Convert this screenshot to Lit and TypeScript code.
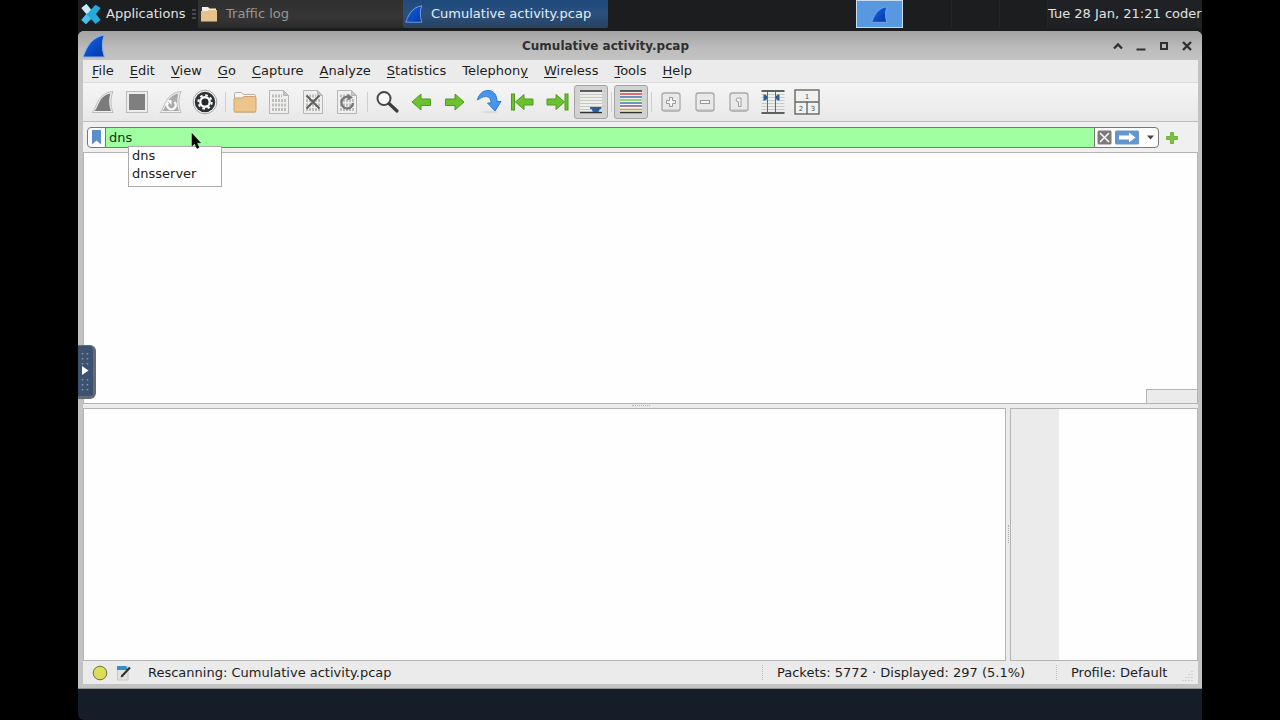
import { LitElement, html, css, svg, nothing, TemplateResult } from "lit";
import { customElement, property, state } from "lit/decorators.js";
import { classMap } from "lit/directives/class-map.js";

const icon = (body: unknown, size = 28, view = 28): TemplateResult =>
  html`<svg width=${size} height=${size} viewBox="0 0 ${view} ${view}" aria-hidden="true">${body}</svg>`;

const sheet = (mark: unknown) => svg`
  <path d="M4.500 2.500H18.500L23.500 7.500V25.500H4.500Z" fill="#f0f0ef" stroke="#b5b5b5"/>
  <path d="M18.500 2.500V7.500H23.500Z" fill="#c4c4c4" stroke="#b5b5b5"/>
  <path d="M7 8H17M7 12.500H21M7 17H21M7 21.500H21" stroke="#bdbdbd" stroke-width="3" stroke-dasharray="2 1"/>
  ${mark}`;

const keycap = (mark: unknown) => svg`
  <rect x="5" y="5" width="18" height="18" rx="2.500" fill="#e9e9e9" stroke="#a8a8a8" stroke-width="1.300"/>
  <path d="M6.500 21.500H21.500" stroke="#cfcfcf"/>
  ${mark}`;

const blueFin = svg`
  <path d="M1 22C4 14 8 3 21.500 1C18.500 8 19.500 16 21.500 22Z" fill="url(#fin)" stroke="#8fb0e6" stroke-width="1"/>
  <defs><linearGradient id="fin" x1="0" y1="0" x2="1" y2="1">
    <stop offset="0" stop-color="#3f83ea"/><stop offset="0.450" stop-color="#0b50cc"/><stop offset="1" stop-color="#0738a5"/>
  </linearGradient></defs>`;

const GREEN = "#6cc22c";
const GREEN_EDGE = "#4f9a22";

const tools: Record<string, unknown> = {
  start: svg`<path d="M3 24.500C8 20 8 5 24 3.500C21 11 21.500 18 24 24.500Z" fill="#efefef" stroke="#bdbdbd"/>
    <path d="M5.500 23C10 18 10 7.500 21.500 5.500C19.500 12 20 17 22 23Z" fill="#7b7b7b"/>`,
  stop: svg`<rect x="3.500" y="3.500" width="21" height="21" fill="#ededed" stroke="#bcbcbc"/>
    <rect x="6" y="6" width="16" height="16" fill="#7f7f7f"/>`,
  restart: svg`<path d="M3 24.500C8 20 8 5 24 3.500C21 11 21.500 18 24 24.500Z" fill="#efefef" stroke="#bdbdbd"/>
    <path d="M5.500 23C10 18 10 7.500 21.500 5.500C19.500 12 20 17 22 23Z" fill="#aaaaaa"/>
    <path d="M11 14.500A4.300 4.300 0 1 0 17.500 14" fill="none" stroke="#fafafa" stroke-width="2.400"/>
    <path d="M9.500 12H14.500V17Z" fill="#fafafa"/>`,
  options: svg`<circle cx="14" cy="14" r="11.800" fill="#fff" stroke="#a0a0a0"/>
    <circle cx="14" cy="14" r="10.300" fill="#2e3234"/>
    <circle cx="14" cy="14" r="6.700" fill="none" stroke="#fff" stroke-width="2" stroke-dasharray="2.600 2.660"/>
    <circle cx="14" cy="14" r="4.700" fill="none" stroke="#fff" stroke-width="2.400"/>
    <circle cx="14" cy="14" r="3.200" fill="#24282a"/>`,
  open: svg`<path d="M3.500 24V5.500Q3.500 4.500 4.500 4.500H10.500L12.500 6.500H23.500Q24.500 6.500 24.500 7.500V24Z" fill="#f7f5f2" stroke="#b4aca2"/>
    <path d="M3 11.500Q3 10 4.500 10H11L13 8.500H23.500Q25 8.500 25 10V22.500Q25 24 23.500 24H4.500Q3 24 3 22.500Z" fill="#edc48c" stroke="#cda26c"/>`,
  save: sheet(nothing),
  close: sheet(svg`<path d="M7.500 7.500L20.500 20.500M20.500 7.500L7.500 20.500" stroke="#606060" stroke-width="2"/>`),
  reload: sheet(svg`<path d="M15.500 9A5.800 5.800 0 1 0 20 15" fill="none" stroke="#777" stroke-width="2.400"/><path d="M14.500 5.500L20 9.500L14.500 12.500Z" fill="#777"/>`),
  find: svg`<circle cx="11" cy="10.500" r="6.500" fill="#f8f8f8" stroke="#484848" stroke-width="2"/>
    <path d="M16 15.500L24 23" stroke="#3d3d3d" stroke-width="3.200" stroke-linecap="round"/>`,
  back: svg`<path d="M5 14L14 6V11H23.500V17.500H14V22Z" fill=${GREEN} stroke=${GREEN_EDGE} stroke-linejoin="round"/>`,
  forward: svg`<path d="M23 14L14 6V11H4.500V17.500H14V22Z" fill=${GREEN} stroke=${GREEN_EDGE} stroke-linejoin="round"/>`,
  goto: svg`<ellipse cx="15" cy="24" rx="8" ry="1.500" fill="#dcdcdc"/>
    <path d="M2.500 12C4 5.500 8.500 2.500 13 2.500C19 2.500 22 7.500 22 13.500H26L20 23L12.500 15H16C16 10.500 14 8.500 10.500 8.500C7 8.500 5 10.500 2.500 12Z" fill="#4796ee" stroke="#2f76cf" stroke-linejoin="round"/>`,
  first: svg`<path d="M6.500 14L15 6.500V11H24V17H15V21.500Z" fill=${GREEN} stroke=${GREEN_EDGE} stroke-linejoin="round"/>
    <rect x="2.500" y="6" width="3" height="16" fill=${GREEN} stroke=${GREEN_EDGE}/>`,
  last: svg`<path d="M21.500 14L13 6.500V11H4V17H13V21.500Z" fill=${GREEN} stroke=${GREEN_EDGE} stroke-linejoin="round"/>
    <rect x="22" y="6" width="3" height="16" fill=${GREEN} stroke=${GREEN_EDGE}/>`,
  autoscroll: svg`<rect x="3" y="3" width="22" height="22" fill="#eeeeec"/>
    <path d="M3 3H25M3 24.500H25" stroke="#2e3436" stroke-width="1.500"/>
    <path d="M3 6.500H25M3 9.500H25M3 12.500H25M3 15.500H25M3 18.500H25M3 21.500H25" stroke="#c5c7c2"/>
    <path d="M13 19H24.500V20.500L22.500 21.500Q22.500 24 20.500 24H17Q15 24 15 21.500L13 20.500Z" fill="#2b5d9c"/>`,
  colorize: svg`<rect x="3" y="3" width="22" height="22" fill="#f4f4f2"/>
    <path d="M3 3H25M3 24.500H25" stroke="#2e3436" stroke-width="1.500"/>
    <path d="M3 6H25" stroke="#e0403a" stroke-width="1.500"/><path d="M3 9H25" stroke="#3f6fb0" stroke-width="1.500"/>
    <path d="M3 12H25" stroke="#71cf3c" stroke-width="1.500"/><path d="M3 15H25" stroke="#4673b3" stroke-width="1.500"/>
    <path d="M3 18H25" stroke="#7b5b8c" stroke-width="1.500"/><path d="M3 21.500H25" stroke="#caa02c" stroke-width="1.500"/>`,
  zoomin: keycap(svg`<path d="M12.500 9.500H15.500V12.500H18.500V15.500H15.500V18.500H12.500V15.500H9.500V12.500H12.500Z" fill="#f5f5f5" stroke="#999"/>`),
  zoomout: keycap(svg`<rect x="9.500" y="12.500" width="9" height="3" fill="#f5f5f5" stroke="#999"/>`),
  normal: keycap(svg`<path d="M16 18.500V10H12.800Q11 10.300 11 12Q11.200 13.800 13.500 13.800V18.500H16" fill="#f5f5f5" stroke="#999"/>`),
  columns: svg`<path d="M2.500 12.500H25.500M2.500 15.500H25.500M2.500 18.500H25.500M2.500 21.500H25.500M2.500 9.500H25.500M2.500 6.500H25.500" stroke="#c9cbc6"/>
    <path d="M2.500 3H25.500M2.500 25H25.500" stroke="#2e3436" stroke-width="1.500"/>
    <path d="M8.500 3V25M16.500 3V25" stroke="#666864"/>
    <path d="M4.500 6.500H6L8 8V11L6 12.500H4.500ZM20.500 6.500H19L17 8V11L19 12.500H20.500Z" fill="#2b5d9c"/>`,
  layout: svg`<rect x="2" y="2" width="24" height="24" fill="#f1f1f0" stroke="#666864" stroke-width="1.400"/>
    <path d="M2 14H26M14 14V26" stroke="#666864" stroke-width="1.400"/>
    <text x="14" y="11" class="digit">1</text><text x="8" y="23" class="digit">2</text><text x="20" y="23" class="digit">3</text>`,
};

interface Tool { id: string; label: string; off?: boolean; pressed?: boolean; }

const groups: Tool[][] = [
  [
    { id: "start", label: "Start capture", off: true },
    { id: "stop", label: "Stop capture", off: true },
    { id: "restart", label: "Restart capture", off: true },
    { id: "options", label: "Capture options" },
  ],
  [
    { id: "open", label: "Open file" },
    { id: "save", label: "Save file", off: true },
    { id: "close", label: "Close file", off: true },
    { id: "reload", label: "Reload file", off: true },
  ],
  [
    { id: "find", label: "Find packet" },
    { id: "back", label: "Go back" },
    { id: "forward", label: "Go forward" },
    { id: "goto", label: "Go to packet" },
    { id: "first", label: "First packet" },
    { id: "last", label: "Last packet" },
    { id: "autoscroll", label: "Auto scroll", pressed: true },
  ],
  [{ id: "colorize", label: "Colorize packet list", pressed: true }],
  [
    { id: "zoomin", label: "Zoom in", off: true },
    { id: "zoomout", label: "Zoom out", off: true },
    { id: "normal", label: "Normal size", off: true },
    { id: "columns", label: "Resize columns" },
    { id: "layout", label: "Layout" },
  ],
];

const reset = css`
  :host { font: 13px/18px "DejaVu Sans", sans-serif; }
  * { box-sizing: border-box; }
  button, input { font: inherit; color: inherit; background: none; border: 0; padding: 0; margin: 0; border-radius: 0; }
  svg { display: block; flex: none; }
`;

@customElement("task-bar")
export class TaskBar extends LitElement {
  static styles = [reset, css`
    :host { display: block; flex: none; }
    .bar { display: flex; height: 31px; padding-bottom: 3px; background: #1c1d1f; color: #e2e2e2; }
    .apps { display: flex; align-items: center; gap: 4px; width: 120px; padding-left: 2px; flex: none; white-space: nowrap; }
    .task { display: flex; align-items: center; gap: 8px; width: 205px; padding-left: 2px; flex: none; color: #969696;
      background: linear-gradient(#2f2f2f, #363636 60%, #2b2b2b); }
    .task.active { color: #e6edf5; background: linear-gradient(#1f4a7c, #2a507e 50%, #29425f); border-radius: 0 0 2px 2px; }
    .grip { margin-left: 3px; }
    .space { flex: 1; }
    .desks { display: flex; }
    .desk { width: 48px; border-right: 1px solid #252628; display: grid; place-items: center; }
    .desk.on { width: 47px; margin-right: 1px; background: #5798e0; border: 1px solid #c9dcf2; }
    .clock { min-width: 154px; flex: none; display: flex; align-items: center; background: #202124; white-space: nowrap; }
  `];

  render() {
    return html`<nav class="bar" aria-label="Panel">
      <button class="apps">
        ${icon(svg`<path d="M1.500 5.500L7 1L12 7L17 2L22.500 5.500L17.500 12L22.500 18.500L17 23L12 17.500L6.500 23L1.500 18.500L7 12Z" fill="#27a9dc"/>
          <path d="M1.500 5.500L7 1L12 7L9 10.500L7 12Z" fill="#c6ebf7"/><path d="M12 17.500L6.500 23L1.500 18.500L7 12Z" fill="#4dbfe6"/>`, 22, 24)}
        Applications
        <svg class="grip" width="4" height="11" viewBox="0 0 4 11" aria-hidden="true"><path d="M0 1H4M0 5H4M0 9H4" stroke="#777"/></svg>
      </button>
      <button class="task">
        ${icon(svg`<path d="M2 16V2H8L9.500 3.500H16V16Z" fill="#f4f0e6"/><path d="M1 16.500V6H7L8.500 5H17V16.500Z" fill="#e6c38b"/>`, 18, 18)}
        Traffic log
      </button>
      <button class="task active">${icon(blueFin, 18, 23)} Cumulative activity.pcap</button>
      <div class="space"></div>
      <div class="desks">
        <button class="desk on" aria-label="Workspace 1">${icon(blueFin, 17, 23)}</button>
        <button class="desk" aria-label="Workspace 2"></button>
        <button class="desk" aria-label="Workspace 3"></button>
        <button class="desk" aria-label="Workspace 4"></button>
      </div>
      <div class="clock">Tue 28 Jan, 21:21 coder</div>
    </nav>`;
  }
}

@customElement("tool-strip")
export class ToolStrip extends LitElement {
  static styles = [reset, css`
    :host { display: block; flex: none; }
    .strip { display: flex; align-items: center; height: 40px; padding-left: 3px; border-top: 1px solid #dcdcdc;
      border-bottom: 1px solid #bdbdbd; background: linear-gradient(#f5f5f5, #e8e8e8); }
    .tool { width: 34px; height: 34px; display: grid; place-items: center; flex: none; border: 1px solid transparent; border-radius: 3px; }
    .tool.on { background: #d2d2d2; border-color: #a4a4a4; }
    .sep { width: 6px; height: 20px; flex: none; background: linear-gradient(#cfcfcf, #cfcfcf) center / 1px 100% no-repeat; }
    .digit { font: 7px "DejaVu Sans", sans-serif; fill: #555; text-anchor: middle; }
  `];

  render() {
    return html`<div class="strip" role="toolbar">
      ${groups.map((g, i) => html`${i ? html`<span class="sep"></span>` : nothing}
        ${g.map((t) => html`<button class=${classMap({ tool: true, on: !!t.pressed })} aria-label=${t.label}
          ?disabled=${t.off} aria-pressed=${t.pressed ? "true" : nothing}>${icon(tools[t.id])}</button>`)}`)}
    </div>`;
  }
}

@customElement("filter-bar")
export class FilterBar extends LitElement {
  @property() value = "dns";
  @state() private hints = ["dns", "dnsserver"];

  static styles = [reset, css`
    :host { display: block; flex: none; }
    .row { position: relative; display: flex; align-items: center; height: 30px; padding: 1px 4px 0; gap: 6px; background: #f0f0f0; }
    .field { flex: 1; display: flex; height: 21px; border: 1px solid #777; border-radius: 4px; background: #fff; overflow: hidden; }
    .mark { width: 18px; display: grid; place-items: center; border-right: 1px solid #777; }
    .text { flex: 1; min-width: 0; background: #a0ffa0; color: #143014; padding-left: 3px; border-right: 1px solid #777; outline: 0; }
    .ends { display: flex; align-items: center; gap: 3px; padding: 0 2px; }
    .add { width: 14px; height: 14px; margin-right: 15px; }
    .hints { position: absolute; z-index: 2; left: 45px; top: 24px; width: 94px; height: 41px; margin: 0; padding: 0 3px;
      list-style: none; background: #fff; border: 1px solid #ababab; color: #222; }
    .cursor { position: absolute; z-index: 3; left: 108px; top: 11px; }
  `];

  private onInput(e: Event) { this.value = (e.target as HTMLInputElement).value; }

  render() {
    return html`<div class="row">
      <div class="field">
        <button class="mark" aria-label="Filter bookmarks">
          <svg width="10" height="15" viewBox="0 0 10 15"><path d="M0 0H9V14.500L4.500 10.500L0 14.500Z" fill="#5b8ecb"/></svg>
        </button>
        <input class="text" aria-label="Display filter" .value=${this.value} @input=${this.onInput} />
        <div class="ends">
          <button aria-label="Clear filter">
            <svg width="15" height="15" viewBox="0 0 15 15"><rect x="0.500" y="0.500" width="14" height="14" rx="1.500" fill="#7a7a7a"/>
              <path d="M3 3L12 12M12 3L3 12" stroke="#fff" stroke-width="1.500"/></svg>
          </button>
          <button aria-label="Apply filter">
            <svg width="24" height="15" viewBox="0 0 24 15"><rect x="0" y="0.500" width="24" height="14" rx="1.500" fill="#6396d0"/>
              <path d="M4 5.500H14V2.500L20.500 7.500L14 12.500V9.500H4Z" fill="#fff"/></svg>
          </button>
          <button aria-label="Recent filters">
            <svg width="14" height="15" viewBox="0 0 14 15"><path d="M5 5.500H12L8.500 9.500Z" fill="#444"/></svg>
          </button>
        </div>
      </div>
      <button class="add" aria-label="Add filter button">
        <svg width="14" height="14" viewBox="0 0 14 14"><path d="M5.500 1.500H8.500V5.500H12.500V8.500H8.500V12.500H5.500V8.500H1.500V5.500H5.500Z" fill="#7cc144" stroke="#6fb43a" stroke-linejoin="round"/></svg>
      </button>
      <ul class="hints" role="listbox" aria-label="Filter suggestions">
        ${this.hints.map((h) => html`<li role="option">${h}</li>`)}
      </ul>
      <svg class="cursor" width="12" height="18" viewBox="0 0 12 18" aria-hidden="true">
        <path d="M1 0.500V13L3.700 10.500L6 15.500L8 14.500L5.800 9.700H9.500Z" fill="#000" stroke="#000" stroke-width="0.500"/>
      </svg>
    </div>`;
  }
}

@customElement("app-root")
export class AppRoot extends LitElement {
  static styles = [reset, css`
    :host { display: block; background: #000; }
    .desktop { position: relative; display: flex; flex-direction: column; min-height: 100vh; margin: 0 78px; background: #151d29;
      border-bottom-left-radius: 6px; }
    .window { flex: 1; display: flex; flex-direction: column; margin-bottom: 31px; padding: 0 4px 4px 5px; background: #c3c3c3;
      border-radius: 6px 6px 0 0; border-bottom: 1px solid #8f9392; color: #1d1d1d; }
    .title { display: flex; align-items: center; height: 29px; margin: 0 -4px 0 -5px; padding: 0 8px 0 4px; border-radius: 6px 6px 0 0;
      background: linear-gradient(#a3a3a3, #bcbcbc 60%, #c3c3c3); flex: none; }
    .title h1 { flex: 1; margin: 0; padding-right: 6px; font-size: 12px; line-height: 18px; font-weight: 700; text-align: center; color: #303030; }
    .ctl { display: flex; gap: 9px; }
    .ctl button { width: 14px; height: 14px; }
    .client { flex: 1; display: flex; flex-direction: column; background: #ebebeb; min-height: 0; }
    .menu { display: flex; height: 22px; padding-left: 1px; flex: none; }
    .menu button { padding: 0 8px; white-space: nowrap; }
    .menu u { text-underline-offset: 2px; }
    .pane { background: #fefefe; border: 1px solid #b4b4b4; min-width: 0; }
    .packets { flex: 1; display: flex; align-items: flex-end; justify-content: flex-end; }
    .corner { width: 51px; height: 14px; background: #ebebeb; border: 1px solid #b4b4b4; border-width: 1px 0 0 1px; }
    .hsplit { height: 4px; flex: none; display: grid; place-items: center; }
    .dots { width: 18px; border-top: 1px dotted #b0b0b0; }
    .lower { flex: 1; display: flex; }
    .detail { flex: 1; }
    .vsplit { width: 4px; flex: none; display: grid; place-items: center; }
    .vdots { height: 18px; border-left: 1px dotted #b0b0b0; }
    .bytes { width: 188px; display: flex; flex: none; }
    .gutter { width: 48px; background: #ebebeb; }
    .status { display: flex; align-items: center; height: 23px; padding: 0 4px 0 9px; flex: none; white-space: nowrap; }
    .status button { margin-right: 8px; }
    .msg { flex: 1; padding-left: 8px; }
    .cell { padding-left: 14px; border-left: 1px dotted #b8b8b8; height: 15px; line-height: 15px; }
    .counts { width: 294px; }
    .profile { width: 126px; }
    .size { align-self: flex-end; margin-bottom: 2px; }
    .drawer { position: absolute; left: 0; top: 345px; width: 18px; height: 54px; background: #3d5170; border: 1px solid #666b72;
      border-width: 1px 3px 3px 0; border-radius: 0 6px 6px 0; }
  `];

  private menus: [string, string, string][] = [
    ["", "F", "ile"], ["", "E", "dit"], ["", "V", "iew"], ["", "G", "o"], ["", "C", "apture"], ["", "A", "nalyze"],
    ["", "S", "tatistics"], ["Telephon", "y", ""], ["", "W", "ireless"], ["", "T", "ools"], ["", "H", "elp"],
  ];

  render() {
    return html`<div class="desktop">
      <task-bar></task-bar>
      <main class="window">
        <header class="title">
          ${icon(blueFin, 24, 23)}
          <h1>Cumulative activity.pcap</h1>
          <div class="ctl">
            <button aria-label="Shade">${icon(svg`<path d="M3 9.500L7 5.500L11 9.500" fill="none" stroke="#303030" stroke-width="2.300"/>`, 14, 14)}</button>
            <button aria-label="Minimize">${icon(svg`<path d="M2.500 10.500H11.500" stroke="#303030" stroke-width="2"/>`, 14, 14)}</button>
            <button aria-label="Maximize">${icon(svg`<rect x="4" y="4" width="6" height="6" fill="none" stroke="#303030" stroke-width="2"/>`, 14, 14)}</button>
            <button aria-label="Close">${icon(svg`<path d="M3 3L11 11M11 3L3 11" stroke="#303030" stroke-width="2.400"/>`, 14, 14)}</button>
          </div>
        </header>
        <div class="client">
          <nav class="menu" aria-label="Menu">
            ${this.menus.map(([a, k, b]) => html`<button>${a}<u>${k}</u>${b}</button>`)}
          </nav>
          <tool-strip></tool-strip>
          <filter-bar></filter-bar>
          <section class="pane packets" aria-label="Packet list"><div class="corner"></div></section>
          <div class="hsplit"><div class="dots"></div></div>
          <div class="lower">
            <section class="pane detail" aria-label="Packet details"></section>
            <div class="vsplit"><div class="vdots"></div></div>
            <section class="pane bytes" aria-label="Packet bytes"><div class="gutter"></div></section>
          </div>
          <footer class="status">
            <button aria-label="Expert information">
              ${icon(svg`<circle cx="8" cy="8" r="6.800" fill="#dcdc58" stroke="#6f6f45"/>`, 16, 16)}
            </button>
            <button aria-label="Capture comment">
              ${icon(svg`<path d="M1.500 1.500H12V15H1.500Z" fill="#e2e2df" stroke="#c8c8c4"/><path d="M1 1H10L12 5H1Z" fill="#3a8cc4"/>
                <path d="M6 11L14 2.500" stroke="#333" stroke-width="2.200"/><path d="M4.500 12.500L7.500 11.500L5.500 9.500Z" fill="#333"/>`, 16, 16)}
            </button>
            <span class="msg">Rescanning: Cumulative activity.pcap</span>
            <span class="cell counts">Packets: 5772 · Displayed: 297 (5.1%)</span>
            <span class="cell profile">Profile: Default</span>
            <svg class="size" width="12" height="12" viewBox="0 0 12 12" aria-hidden="true">
              <path d="M10 1V12M7 4V12M4 7V12M1 10V12" stroke="#b5b5b5" stroke-dasharray="1 2"/></svg>
          </footer>
        </div>
      </main>
      <button class="drawer" aria-label="Open controls">
        <svg width="14" height="50" viewBox="0 0 14 50"><path d="M4.500 7V19M9.500 7V19M4.500 33V46M9.500 33V46" stroke="#8593ab" stroke-width="1.500" stroke-dasharray="1.500 3.500"/>
          <path d="M4 20L10.500 24.500L4 29Z" fill="#fff"/></svg>
      </button>
    </div>`;
  }
}
